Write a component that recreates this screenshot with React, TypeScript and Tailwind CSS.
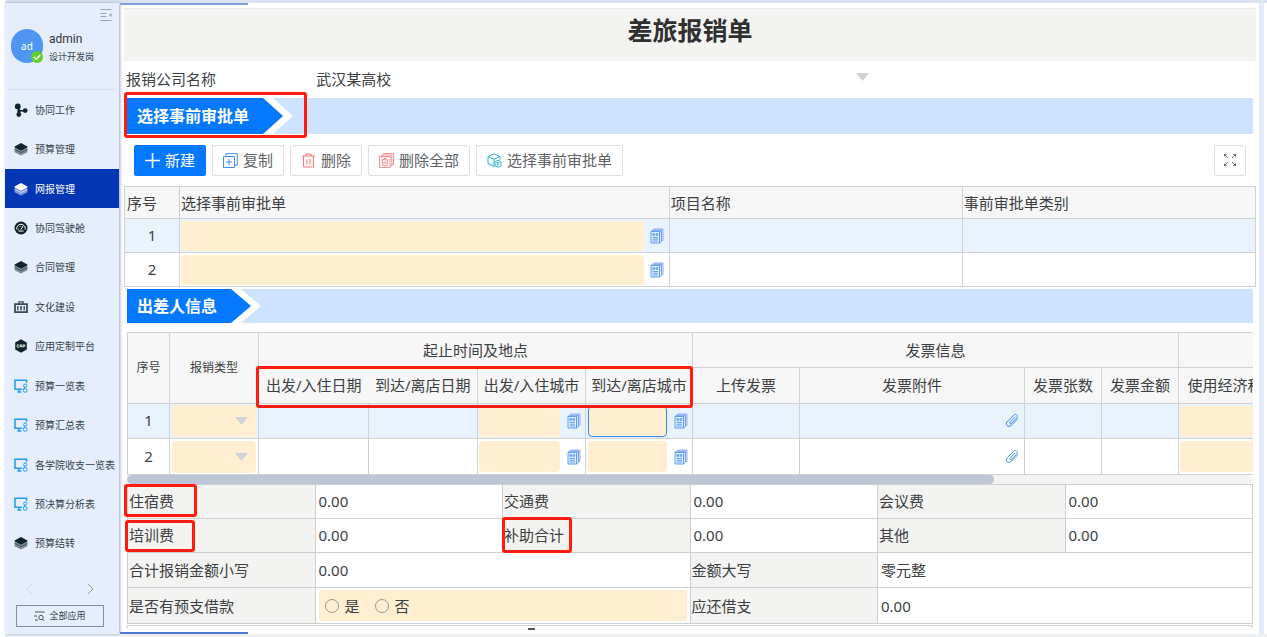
import type { ReactNode } from "react";
import clsx from "clsx";

type IconName = "nodes" | "layers" | "gauge" | "case" | "cap" | "screen";

const menuItems: { label: string; icon: IconName; active?: boolean }[] = [
  { label: "协同工作", icon: "nodes" },
  { label: "预算管理", icon: "layers" },
  { label: "网报管理", icon: "layers", active: true },
  { label: "协同驾驶舱", icon: "gauge" },
  { label: "合同管理", icon: "layers" },
  { label: "文化建设", icon: "case" },
  { label: "应用定制平台", icon: "cap" },
  { label: "预算一览表", icon: "screen" },
  { label: "预算汇总表", icon: "screen" },
  { label: "各学院收支一览表", icon: "screen" },
  { label: "预决算分析表", icon: "screen" },
  { label: "预算结转", icon: "layers" },
];

function MenuIcon({ name }: { name: IconName }) {
  return (
    <svg viewBox="0 0 14 14" className="size-[14px] shrink-0" fill="none" stroke="currentColor" aria-hidden="true">
      {name === "nodes" && (
        <>
          <path d="M4 3.5 5 7.5 11 8M5 8 4.5 12" strokeWidth="1.6" />
          <circle cx="3.8" cy="3.4" r="2.9" fill="currentColor" stroke="none" />
          <circle cx="11.2" cy="7.6" r="2.4" fill="currentColor" stroke="none" />
          <circle cx="5" cy="8" r="1.8" fill="currentColor" stroke="none" />
          <circle cx="4.8" cy="11.5" r="2.4" fill="currentColor" stroke="none" />
        </>
      )}
      {name === "layers" && (
        <g fill="currentColor" stroke="none">
          <path d="M.6 8.2 7 11.6l6.4-3.4v2L7 13.6.6 10.2z" opacity=".5" />
          <path d="M.6 6 7 9.4 13.4 6v2.2L7 11.6.6 8.2z" opacity=".7" />
          <path d="M7 1 13.4 4.4v1L7 8.9.6 5.4v-1z" />
        </g>
      )}
      {name === "gauge" && (
        <>
          <circle cx="7" cy="7" r="6.5" fill="currentColor" stroke="none" />
          <path d="M2.8 8.5a4.3 4.3 0 1 1 8.4 0M7 8.5l2-3.6M4.5 10h5" stroke="#fff" strokeWidth="1" />
          <path d="M4.5 8.5v-1M6 6v-.8" stroke="#fff" strokeWidth=".8" />
        </>
      )}
      {name === "case" && (
        <g stroke="#3a4d54">
          <path d="M1 4.2h12v8H1z" strokeWidth="1.8" />
          <path d="M4.8 4V1.8h4.4V4" strokeWidth="1.2" />
          <path d="M3.8 6v4.6M10.2 6v4.6M7 6v4.6M6 7.6h2" strokeWidth="1.4" />
        </g>
      )}
      {name === "cap" && (
        <>
          <path d="M7 .3 12.8 3.6v6.8L7 13.7 1.2 10.4V3.6z" fill="currentColor" stroke="none" />
          <path d="M5 5.9H3.2v2.2H5M6 8.3V5.9h1.8v2.4M6 7.3h1.8M9 8.5V5.9h1.8v1.4H9" stroke="#fff" strokeWidth=".8" />
        </>
      )}
      {name === "screen" && (
        <g stroke="#1f9cf5" strokeWidth="1.5">
          <path d="M8 10.2H1V1.2h11.6v2.6M5 10.4v2.4M3.4 13h4" />
          <circle cx="11.2" cy="6.6" r="1.6" strokeWidth="1" />
          <circle cx="11.2" cy="11.4" r="1.9" strokeWidth="1" />
          <path d="M10.6 8.2 9.8 9.8" strokeWidth="1" />
        </g>
      )}
    </svg>
  );
}

function PickButton({ label }: { label: string }) {
  return (
    <button type="button" aria-label={label} className="flex w-[25px] shrink-0 items-center justify-center pl-0.5">
      <svg viewBox="0 0 14 16" className="h-4 w-3.5" fill="none" stroke="#4f95ef" strokeWidth=".9">
        <path d="M4 2.5V1h9v11.5h-1.2" fill="#efe6fb" stroke="#8ba6ee" />
        <path d="M1 3.5h8.5v11.5H1z" fill="#e3f0fe" />
        <path d="M1 3.5 2.4 2.2h9v11.3L9.5 15M9.5 3.5l1.9-1.3" />
        <path d="M2.8 5.7h1.7v1.6H2.8zM6 5.7h1.7v1.6H6zM2.6 9.4H8M2.6 11.2H8M2.6 13H8" />
      </svg>
    </button>
  );
}

function ClipButton({ label }: { label: string }) {
  return (
    <button type="button" aria-label={label} className="ml-auto flex w-6 items-center justify-center">
      <svg viewBox="0 0 16 16" className="size-4" fill="none" stroke="#3f8bee" strokeWidth="1" strokeLinecap="round">
        <path d="M10.6 5.2 6 10c-.9 1.1.3 2.3 1.4 1.4l5.4-5.6c1.8-2.1-1-4.6-3.1-2.6L3 9.9c-2.2 2.8 1.2 6.1 4 3.6L13.6 7" />
      </svg>
    </button>
  );
}

function Banner({ title, marked, className }: { title: string; marked?: boolean; className: string }) {
  return (
    <div className={clsx("relative mx-[3px] flex bg-[#cde3ff]", className)}>
      <div className="flex bg-white pr-2.5 [clip-path:polygon(0_0,calc(100%-20px)_0,100%_50%,calc(100%-20px)_100%,0_100%)]">
        <h2 className="flex items-center bg-[#0479ff] pr-[34px] pl-2.5 text-base leading-none font-bold text-white [clip-path:polygon(0_0,calc(100%-20px)_0,100%_50%,calc(100%-20px)_100%,0_100%)]">
          {title}
        </h2>
      </div>
      {marked && <Mark className="-top-1.5 -left-[3px] h-[46px] w-[183px]" />}
    </div>
  );
}

function Mark({ className }: { className: string }) {
  return <span className={clsx("pointer-events-none absolute z-10 rounded-[3px] border-3 border-[#ff1b10]", className)} />;
}

function ToolButton({ children, icon, primary }: { children: ReactNode; icon: ReactNode; primary?: boolean }) {
  return (
    <button
      type="button"
      className={clsx(
        "flex h-[31px] items-center gap-[5px] rounded-[2px] border px-2.5 whitespace-nowrap",
        primary ? "border-[#0479ff] bg-[#0479ff] text-white" : "border-[#dcdfe6] bg-white text-[#606266]"
      )}
    >
      <svg viewBox="0 0 15 15" className="size-[15px]" fill="none" stroke="currentColor" strokeWidth="1" aria-hidden="true">
        {icon}
      </svg>
      {children}
    </button>
  );
}

function TypeSelect({ label }: { label: string }) {
  return (
    <div className="relative mx-[2px]">
      <select aria-label={label} className="block h-8 w-full appearance-none rounded-[4px] bg-[#ffeed0] px-2">
        <option></option>
      </select>
      <Triangle className="top-3 right-2" />
    </div>
  );
}

function Triangle({ className }: { className: string }) {
  return (
    <svg viewBox="0 0 13 8" className={clsx("pointer-events-none absolute h-2 w-[13px]", className)} fill="#d0d2d6">
      <path d="M0 0h13L6.5 8z" />
    </svg>
  );
}

function Sidebar() {
  return (
    <aside className="z-10 flex w-[114px] shrink-0 flex-col bg-[#e6eefd] text-[10px] text-[#33434a] shadow-[1px_0_3px_#9aa6bf]">
      <div className="relative mx-[3px] flex h-[87px] shrink-0 items-center gap-1.5 border-b border-[#d5dfef] pl-[3px]">
        <button type="button" aria-label="收起菜单" className="absolute top-1.5 right-1">
          <svg viewBox="0 0 12 12" className="size-3" fill="none" stroke="#98a2b3">
            <path d="M.5 .5h11M.5 4.5h6M.5 7.5h6M.5 11.5h11" />
            <path d="M11.5 4v4L8.8 6z" fill="#98a2b3" stroke="none" />
          </svg>
        </button>
        <div className="relative flex h-[34px] w-8 items-center justify-center rounded-full bg-[#4f97f3] text-white">
          ad
          <svg viewBox="0 0 12 12" className="absolute right-0 bottom-0 size-3" fill="none">
            <circle cx="6" cy="6" r="6" fill="#62cf2f" />
            <path d="m3 6 2.2 2.2L9.2 4" stroke="#fff" strokeWidth="1.3" />
          </svg>
        </div>
        <div className="pt-1">
          <div className="font-['Roboto',sans-serif] text-xs leading-[18px] text-[#333]">admin</div>
          <div className="text-[9px] leading-[18px]">设计开发岗</div>
        </div>
      </div>
      <nav className="flex-1">
        <ul className="flex h-full flex-col">
          {menuItems.map((item) => (
            <li key={item.label} className="flex flex-1">
              <a
                href="#"
                className={clsx(
                  "flex flex-1 items-center gap-[7px] pl-[9px] whitespace-nowrap",
                  item.active && "bg-[#0236b4] text-white"
                )}
              >
                <span className={item.active ? "text-white" : "text-[#10262c]"}>
                  <MenuIcon name={item.icon} />
                </span>
                {item.label}
              </a>
            </li>
          ))}
        </ul>
      </nav>
      <div className="flex h-[42px] shrink-0 items-end justify-between pr-[25px] pb-2.5 pl-[21px]">
        <button type="button" aria-label="上一页">
          <svg viewBox="0 0 7 12" className="h-3 w-[7px]" fill="none" stroke="#cfd9ea">
            <path d="M6 1 1 6l5 5" />
          </svg>
        </button>
        <button type="button" aria-label="下一页">
          <svg viewBox="0 0 7 12" className="h-3 w-[7px]" fill="none" stroke="#8f9aae">
            <path d="m1 1 5 5-5 5" />
          </svg>
        </button>
      </div>
      <button
        type="button"
        className="mr-[15px] mb-[7px] ml-[11px] flex h-[22px] shrink-0 items-center justify-center gap-1 border border-[#84909f] text-[9px]"
      >
        <svg viewBox="0 0 11 11" className="size-[11px]" fill="none" stroke="currentColor" strokeWidth=".9">
          <path d="M1 1h9.5M0 5h3M1 9h3" />
          <circle cx="7" cy="6.5" r="2.2" />
          <path d="m8.6 8.2 1.6 1.8" />
        </svg>
        全部应用
      </button>
    </aside>
  );
}

const rowColors = ["bg-[#e8f3fe]", "bg-white"];

function ApprovalTable() {
  return (
    <table className="w-full table-fixed border-collapse bg-white [&_td]:border [&_td]:border-[#d0d2d4] [&_th]:border [&_th]:border-[#d0d2d4]">
      <colgroup>
        <col className="w-[55px]" />
        <col className="w-[43.3%]" />
        <col className="w-[25.9%]" />
        <col />
      </colgroup>
      <thead>
        <tr className="h-8 bg-[#f6f6f6] text-left">
          <th className="pl-0.5 font-normal">序号</th>
          <th className="pl-px font-normal">选择事前审批单</th>
          <th className="pl-px font-normal">项目名称</th>
          <th className="pl-px font-normal">事前审批单类别</th>
        </tr>
      </thead>
      <tbody>
        {rowColors.map((color, i) => (
          <tr key={color} className={clsx("h-[34px]", color)}>
            <td className="pb-0.5 text-center">{i + 1}</td>
            <td>
              <div className="flex pl-px">
                <input aria-label={`审批单 ${i + 1}`} className="h-[30px] min-w-0 flex-1 rounded-[3px] bg-[#ffeed0] px-2" />
                <PickButton label="选择审批单" />
              </div>
            </td>
            <td></td>
            <td></td>
          </tr>
        ))}
      </tbody>
    </table>
  );
}

function TravelerTable() {
  return (
    <div className="mx-[3px] mt-[9px] overflow-hidden">
      <table className="w-[1460px] table-fixed border-collapse bg-white [&_td]:border [&_td]:border-[#d0d2d4] [&_th]:border [&_th]:border-[#d0d2d4] [&_th]:font-normal">
        <colgroup>
          <col className="w-[42px]" />
          <col className="w-[89px]" />
          <col className="w-[110px]" />
          <col className="w-[109px]" />
          <col className="w-[108px]" />
          <col className="w-[107px]" />
          <col className="w-[107px]" />
          <col className="w-[225px]" />
          <col className="w-[77px]" />
          <col className="w-[77px]" />
          <col className="w-[108px]" />
          <col />
        </colgroup>
        <thead className="bg-[#f6f6f6]">
          <tr className="h-[35px]">
            <th rowSpan={2} className="text-xs">序号</th>
            <th rowSpan={2} className="text-xs">报销类型</th>
            <th colSpan={4}>起止时间及地点</th>
            <th colSpan={4}>发票信息</th>
            <th colSpan={2}></th>
          </tr>
          <tr className="h-9 whitespace-nowrap [&_th]:pb-0.5">
            <th className="relative border-r-0!">
              出发/入住日期
              <Mark className="-top-0.5 -left-[3px] h-[42px] w-[437px]" />
            </th>
            <th className="border-l-0!">到达/离店日期</th>
            <th>出发/入住城市</th>
            <th>到达/离店城市</th>
            <th>上传发票</th>
            <th>发票附件</th>
            <th>发票张数</th>
            <th>发票金额</th>
            <th>使用经济科目</th>
            <th></th>
          </tr>
        </thead>
        <tbody>
          {rowColors.map((color, i) => (
            <tr key={color} className={clsx(i === 0 ? "h-[35px]" : "h-9", color)}>
              <td className="pb-0.5 text-center">{i + 1}</td>
              <td>
                <TypeSelect label={`报销类型 ${i + 1}`} />
              </td>
              <td></td>
              <td></td>
              <td>
                <div className="flex pl-px">
                  <input aria-label={`出发城市 ${i + 1}`} className="h-[31px] min-w-0 flex-1 rounded-[4px] bg-[#ffeed0] px-1" />
                  <PickButton label="选择出发城市" />
                </div>
              </td>
              <td>
                <div className="flex pl-0.5">
                  <input
                    aria-label={`到达城市 ${i + 1}`}
                    className={clsx(
                      "h-[31px] min-w-0 flex-1 rounded-[4px] bg-[#ffeed0] px-1",
                      i === 0 && "border border-[#2f8df5]"
                    )}
                  />
                  <PickButton label="选择到达城市" />
                </div>
              </td>
              <td></td>
              <td className="pb-0.5">
                <ClipButton label="添加附件" />
              </td>
              <td></td>
              <td></td>
              <td className="border-r-0!">
                <input aria-label={`经济科目 ${i + 1}`} className="ml-px block h-[31px] w-full rounded-[4px] bg-[#ffeed0] px-1" />
              </td>
              <td></td>
            </tr>
          ))}
        </tbody>
      </table>
      <div className="h-[9px] rounded-full bg-[#f3f3f4]">
        <div className="h-full w-[77%] rounded-full bg-[#bcc6d6]"></div>
      </div>
    </div>
  );
}

function LabelCell({ children, mark }: { children?: ReactNode; mark?: string }) {
  return (
    <th scope="row" className="relative bg-[#f3f3f1] pl-px text-left font-normal">
      {children}
      {mark && <Mark className={mark} />}
    </th>
  );
}

function SummaryTable() {
  return (
    <div className="mx-[3px]">
      <table className="w-full table-fixed border-collapse bg-white [&_td]:border [&_td]:border-[#cfcfcf] [&_td]:pl-[3px] [&_th]:border [&_th]:border-[#cfcfcf]">
        <tbody>
          <tr className="h-[34px] [&_td]:pb-0.5 [&_th]:pb-0.5">
            <LabelCell mark="-top-px -left-1 h-[33px] w-[73px]">住宿费</LabelCell>
            <td>0.00</td>
            <LabelCell>交通费</LabelCell>
            <td>0.00</td>
            <LabelCell>会议费</LabelCell>
            <td>0.00</td>
          </tr>
          <tr className="h-[34px] [&_td]:pb-0.5 [&_th]:pb-0.5">
            <LabelCell mark="top-px -left-[3px] h-8 w-[70px]">培训费</LabelCell>
            <td>0.00</td>
            <LabelCell mark="-top-0.5 -left-px h-9 w-[70px]">补助合计</LabelCell>
            <td>0.00</td>
            <LabelCell>其他</LabelCell>
            <td>0.00</td>
          </tr>
          <tr className="h-[35px]">
            <LabelCell>合计报销金额小写</LabelCell>
            <td colSpan={2}>0.00</td>
            <LabelCell>金额大写</LabelCell>
            <td colSpan={2}>零元整</td>
          </tr>
          <tr className="h-9">
            <LabelCell>是否有预支借款</LabelCell>
            <td colSpan={2}>
              <fieldset className="mr-[3px] flex h-[31px] items-center gap-[15px] rounded-[3px] bg-[#ffeed0] pl-1.5">
                {["是", "否"].map((option) => (
                  <label key={option} className="flex items-center gap-[6px]">
                    <input
                      type="radio"
                      name="advance"
                      className="size-[14px] appearance-none rounded-full border border-[#999] checked:border-4 checked:border-[#0479ff]"
                    />
                    {option}
                  </label>
                ))}
              </fieldset>
            </td>
            <LabelCell>应还借支</LabelCell>
            <td colSpan={2}>0.00</td>
          </tr>
        </tbody>
      </table>
      <div className="mt-px h-[3px] border-x border-t border-[#cfcfcf]"></div>
    </div>
  );
}

export default function App() {
  return (
    <div className="flex min-h-screen flex-col bg-white font-['Noto_Sans','Noto_Sans_CJK_SC',sans-serif] text-[15px] leading-5 text-[#3c3f43]">
      <div className="ml-[5px] h-[3px] bg-[#dbe3f1]"></div>
      <div className="mr-[3px] ml-[5px] flex flex-1">
        <Sidebar />
        <main className="flex min-w-0 flex-1 flex-col border-r-5 border-[#e3ebfa] pr-[3px] pl-[5px]">
          <div className="-ml-1 h-[5px] w-32 border-t-2 border-[#7f9fe3]"></div>
          <h1 className="h-[53px] border-t border-[#e6e8ec] bg-[#f3f3f1] pt-[5px] text-center text-[25px] leading-8 font-bold text-[#303030]">
            差旅报销单
          </h1>
          <div className="flex h-[37px] items-center pb-0.5 pl-0.5">
            <label htmlFor="company" className="w-1/6">
              报销公司名称
            </label>
            <div className="relative w-1/2">
              <select id="company" className="block w-full appearance-none pl-0.5">
                <option>武汉某高校</option>
              </select>
              <Triangle className="top-1 right-2.5" />
            </div>
          </div>
          <Banner title="选择事前审批单" marked className="h-9" />
          <div className="flex h-[52px] items-center gap-1.5 pr-2.5 pl-2.5">
            <ToolButton primary icon={<path d="M7.5 0v15M0 7.5h15" strokeWidth="1.6" />}>
              新建
            </ToolButton>
            <ToolButton
              icon={
                <g stroke="#3f8cf2">
                  <path d="M.5 3.5h11v11H.5zM3 3V.7h11.3v11.6H12M6 6v6M3 9h6" />
                </g>
              }
            >
              复制
            </ToolButton>
            <ToolButton
              icon={
                <g stroke="#f77370">
                  <path d="M1 3h13M5 3V1h5v2M2.6 3v11h9.8V3M6 6v5.5M9 6v5.5" />
                </g>
              }
            >
              删除
            </ToolButton>
            <ToolButton
              icon={
                <g stroke="#f77370" strokeWidth=".8">
                  <path d="M.5 3.5h10.5v11H.5zM2.5 3.3V2h10.3v11h-1.6M4.4 1.8V.5h10.1v11H13" />
                  <path d="M2.5 6.8h6.5M4.6 6.6v-1h2.4v1M3.3 7v5.3h4.9V7M5 8.6v2.2M6.6 8.6v2.2" />
                </g>
              }
            >
              删除全部
            </ToolButton>
            <ToolButton
              icon={
                <g stroke="#28b3cd">
                  <path d="M7 13.5 1 10.7V3.6L7 .8l6 2.8v3M1 3.6l6 2.6 6-2.6M7 6.2v7.3" />
                  <circle cx="11" cy="10.8" r="3.3" />
                  <path d="M9.5 9.5h3M9.5 11h3M11 9.5v3.2" strokeWidth=".8" />
                </g>
              }
            >
              选择事前审批单
            </ToolButton>
            <button
              type="button"
              aria-label="全屏"
              className="ml-auto flex h-[31px] w-8 items-center justify-center rounded-[2px] border border-[#dcdfe6]"
            >
              <svg viewBox="0 0 12 12" className="size-3" fill="none" stroke="#62676d">
                <path d="m.8.8 3.4 3.4M11.2.8 7.8 4.2M.8 11.2l3.4-3.4M11.2 11.2 7.8 7.8" />
                <path d="M.5 2.5v-2h2M9.5.5h2v2M.5 9.5v2h2M9.5 11.5h2v-2" />
              </svg>
            </button>
          </div>
          <ApprovalTable />
          <Banner title="出差人信息" className="mt-0.5 h-[34px]" />
          <TravelerTable />
          <SummaryTable />
          <div className="-ml-1 flex h-1.5">
            <div className="w-32 border-b-2 border-[#4d78d8]"></div>
            <div className="ml-[280px] h-0.5 w-[7px] bg-[#555]"></div>
          </div>
        </main>
      </div>
      <div className="ml-[5px] h-[3px] bg-[#eeeff1]"></div>
    </div>
  );
}
